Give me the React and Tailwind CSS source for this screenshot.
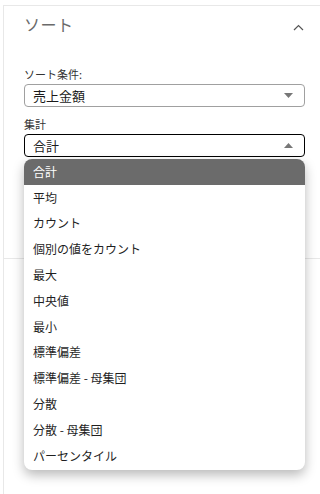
import React from "react";

const OPTIONS = [
  "合計",
  "平均",
  "カウント",
  "個別の値をカウント",
  "最大",
  "中央値",
  "最小",
  "標準偏差",
  "標準偏差 - 母集団",
  "分散",
  "分散 - 母集団",
  "パーセンタイル",
];

function Triangle({ up = false }) {
  return (
    <svg width="9" height="5" viewBox="0 0 9 5" className="shrink-0">
      <polygon
        points={up ? "0,5 9,5 4.5,0" : "0,0 9,0 4.5,5"}
        fill="#777777"
      />
    </svg>
  );
}

function SelectBox({ value, open = false }) {
  return (
    <div
      className={`flex items-center justify-between h-[23px] pl-[8px] pr-[11px] rounded-[4px] bg-white border ${
        open ? "border-black" : "border-[#a0a0a0]"
      }`}
    >
      <span className="text-[13px] leading-none text-[#1a1a1a]">{value}</span>
      <Triangle up={open} />
    </div>
  );
}

export default function App() {
  return (
    <div className="w-[320px] h-[494px] bg-white overflow-hidden font-['Noto_Sans_CJK_JP','Noto_Sans',sans-serif]">
      <div className="mt-[5px] ml-[3px] h-full border-t border-l border-[#e8e8e8]">
        <section className="h-[253px] border-b border-[#e8e8e8] pl-[20px] pr-[15px]">
          {/* header */}
          <div className="flex items-center justify-between pt-[5px] h-[30px]">
            <h2 className="text-[16px] leading-[24px] font-normal text-[#6a6a6a] tracking-[0.5px]">
              ソート
            </h2>
            <svg
              width="11"
              height="7"
              viewBox="0 0 11 7"
              className="mt-[8px] mr-[1px]"
            >
              <path
                d="M1 6 L5.5 1.5 L10 6"
                fill="none"
                stroke="#555555"
                strokeWidth="1.2"
              />
            </svg>
          </div>

          <div className="mt-[30px] text-[11px] leading-[16px] text-[#333333]">
            ソート条件:
          </div>
          <div className="mt-[2px]">
            <SelectBox value="売上金額" />
          </div>

          <div className="mt-[9px] text-[11px] leading-[16px] text-[#333333]">
            集計
          </div>
          <div className="relative mt-[2px]">
            <SelectBox value="合計" open />
            <ul className="absolute left-0 right-0 top-full mt-[2px] z-10 bg-white rounded-[8px] overflow-hidden shadow-[0_5px_12px_rgba(0,0,0,0.28)] pb-[1px]">
              {OPTIONS.map((opt, i) => (
                <li
                  key={opt}
                  className={`h-[25.8px] flex items-center pl-[9px] text-[12px] ${
                    i === 0
                      ? "bg-[#6b6b6b] text-white"
                      : "text-[#1f1f1f]"
                  }`}
                >
                  {opt}
                </li>
              ))}
            </ul>
          </div>
        </section>
      </div>
    </div>
  );
}
